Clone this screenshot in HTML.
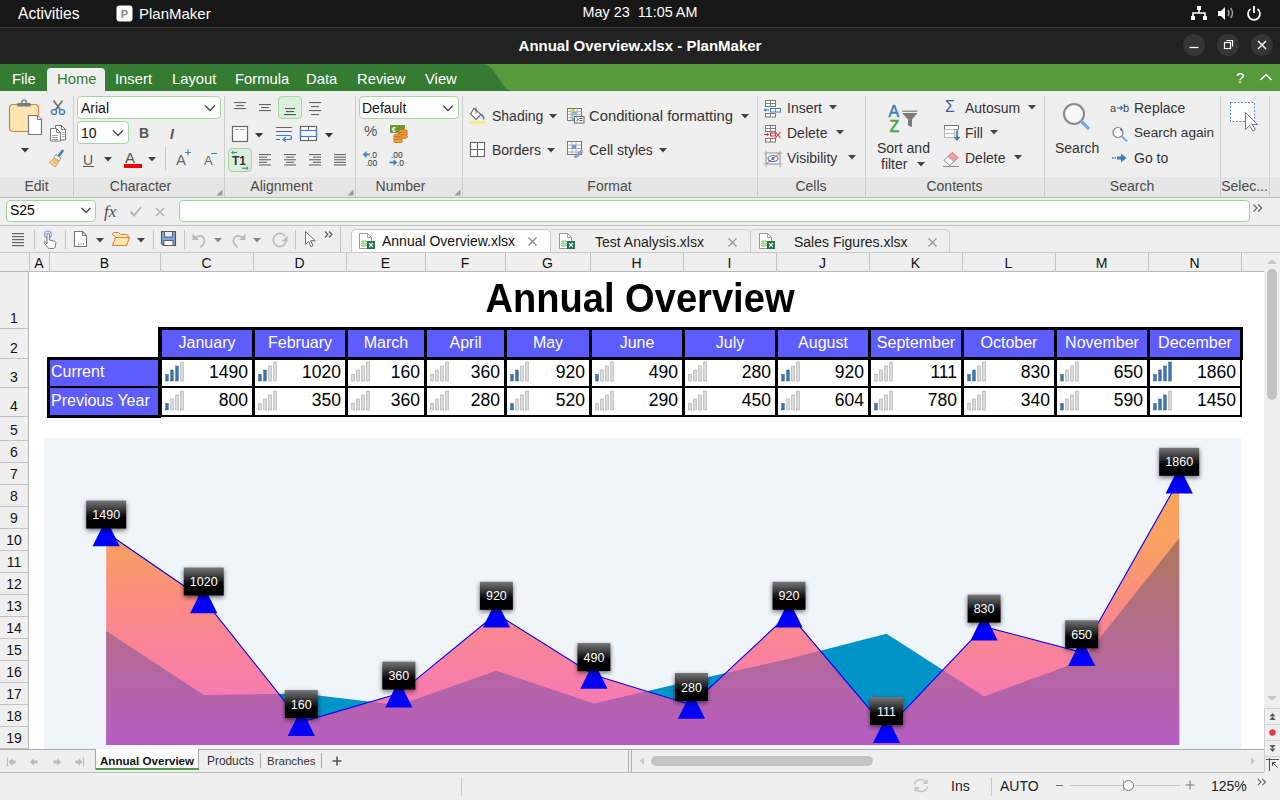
<!DOCTYPE html>
<html><head><meta charset="utf-8"><style>
html,body{margin:0;padding:0;width:1280px;height:800px;overflow:hidden;position:relative;font-family:"Liberation Sans", sans-serif;background:#efefef}
div{box-sizing:border-box}
</style></head><body>
<div style="position:absolute;left:0px;top:0px;width:1280px;height:27px;background:#171717"></div>
<div style="position:absolute;left:18px;top:0px;height:27px;line-height:27px;text-align:left;white-space:nowrap;color:#fff;font-size:15.6px;">Activities</div>
<svg style="position:absolute;left:116px;top:5px;" width="17" height="17" viewBox="0 0 17 17"><rect x="0.5" y="0.5" width="16" height="16" rx="3" fill="#fafafa"/><text x="8.3" y="12.8" font-family="Liberation Sans" font-weight="bold" font-size="11" fill="#8a8a8a" text-anchor="middle">P</text></svg>
<div style="position:absolute;left:139px;top:0px;height:27px;line-height:27px;text-align:left;white-space:nowrap;color:#fff;font-size:15px;">PlanMaker</div>
<div style="position:absolute;left:540px;top:0px;width:200px;height:25px;line-height:25px;text-align:center;white-space:nowrap;color:#fff;font-size:14.4px;">May 23&nbsp;&nbsp;11:05 AM</div>
<svg style="position:absolute;left:1190px;top:5px;" width="18" height="16" viewBox="0 0 18 16"><rect x="7" y="1" width="4" height="4" fill="#fff"/><rect x="1" y="11" width="4" height="4" fill="#fff"/><rect x="13" y="11" width="4" height="4" fill="#fff"/><path d="M9 5v3M3 11V8h12v3" stroke="#fff" stroke-width="1.6" fill="none"/></svg>
<svg style="position:absolute;left:1216px;top:5px;" width="20" height="17" viewBox="0 0 20 17"><path d="M2 6h3l4-4v13l-4-4H2z" fill="#fff"/><path d="M12 5q2 3 0 6M14.5 3q4 5 0 10" stroke="#fff" stroke-width="1.4" fill="none" opacity="0.6"/></svg>
<svg style="position:absolute;left:1245px;top:4px;" width="18" height="18" viewBox="0 0 18 18"><path d="M5.5 5a6 6 0 1 0 7 0" stroke="#fff" stroke-width="1.8" fill="none"/><path d="M9 2v7" stroke="#fff" stroke-width="1.8"/></svg>
<div style="position:absolute;left:0px;top:27px;width:1280px;height:37px;background:#222222"></div>
<div style="position:absolute;left:0px;top:27px;width:1280px;height:1px;background:#363636"></div>
<div style="position:absolute;left:340px;top:27px;width:600px;height:37px;line-height:37px;text-align:center;white-space:nowrap;color:#fff;font-size:15px;font-weight:bold;">Annual Overview.xlsx - PlanMaker</div>
<div style="position:absolute;left:1183px;top:34px;width:22px;height:22px;background:#353535;border-radius:11px"></div>
<div style="position:absolute;left:1217px;top:34px;width:22px;height:22px;background:#353535;border-radius:11px"></div>
<div style="position:absolute;left:1251px;top:34px;width:22px;height:22px;background:#353535;border-radius:11px"></div>
<svg style="position:absolute;left:1188px;top:41px;" width="12" height="12" viewBox="0 0 12 12"><path d="M1.5 6.5h9" stroke="#fff" stroke-width="1.3"/></svg>
<svg style="position:absolute;left:1222px;top:39px;" width="12" height="12" viewBox="0 0 12 12"><rect x="2.5" y="3.5" width="6" height="6" stroke="#fff" stroke-width="1.2" fill="none"/><path d="M4.5 1.5h6v6" stroke="#fff" stroke-width="1.2" fill="none"/></svg>
<svg style="position:absolute;left:1256px;top:39px;" width="12" height="12" viewBox="0 0 12 12"><path d="M2 2l8 8M10 2l-8 8" stroke="#fff" stroke-width="1.4"/></svg>
<div style="position:absolute;left:0px;top:64px;width:1280px;height:27px;background:#579a3e"></div>
<svg style="position:absolute;left:0px;top:64px;" width="520" height="27" viewBox="0 0 520 27"><path d="M0 0H480C492 0 494 8 500 16C504 22 506 26 512 27H0Z" fill="#357c32"/></svg>
<div style="position:absolute;left:47px;top:68px;width:58px;height:23px;background:#efefef;border-radius:4px 4px 0 0"></div>
<div style="position:absolute;left:12px;top:67px;height:25px;line-height:25px;text-align:left;white-space:nowrap;color:#fff;font-size:14.8px;">File</div>
<div style="position:absolute;left:57px;top:67px;height:25px;line-height:25px;text-align:left;white-space:nowrap;color:#2e7d32;font-size:14.8px;">Home</div>
<div style="position:absolute;left:115px;top:67px;height:25px;line-height:25px;text-align:left;white-space:nowrap;color:#fff;font-size:14.8px;">Insert</div>
<div style="position:absolute;left:172px;top:67px;height:25px;line-height:25px;text-align:left;white-space:nowrap;color:#fff;font-size:14.8px;">Layout</div>
<div style="position:absolute;left:235px;top:67px;height:25px;line-height:25px;text-align:left;white-space:nowrap;color:#fff;font-size:14.8px;">Formula</div>
<div style="position:absolute;left:306px;top:67px;height:25px;line-height:25px;text-align:left;white-space:nowrap;color:#fff;font-size:14.8px;">Data</div>
<div style="position:absolute;left:357px;top:67px;height:25px;line-height:25px;text-align:left;white-space:nowrap;color:#fff;font-size:14.8px;">Review</div>
<div style="position:absolute;left:425px;top:67px;height:25px;line-height:25px;text-align:left;white-space:nowrap;color:#fff;font-size:14.8px;">View</div>
<div style="position:absolute;left:1236px;top:64px;height:27px;line-height:27px;text-align:left;white-space:nowrap;color:#fff;font-size:15px;">?</div>
<svg style="position:absolute;left:1259px;top:72px;" width="14" height="10" viewBox="0 0 14 10"><path d="M1.5 8l5.5-5.5 5.5 5.5" stroke="#fff" stroke-width="1.4" fill="none"/></svg>
<div style="position:absolute;left:0px;top:91px;width:1280px;height:107px;background:#efefef"></div>
<div style="position:absolute;left:0px;top:177px;width:1280px;height:20px;background:#e6e6e6"></div>
<div style="position:absolute;left:0px;top:197px;width:1280px;height:1px;background:#bdbdbd"></div>
<div style="position:absolute;left:73px;top:96px;width:1px;height:101px;background:#cdcdcd"></div>
<div style="position:absolute;left:224px;top:96px;width:1px;height:101px;background:#cdcdcd"></div>
<div style="position:absolute;left:355px;top:96px;width:1px;height:101px;background:#cdcdcd"></div>
<div style="position:absolute;left:462px;top:96px;width:1px;height:101px;background:#cdcdcd"></div>
<div style="position:absolute;left:757px;top:96px;width:1px;height:101px;background:#cdcdcd"></div>
<div style="position:absolute;left:865px;top:96px;width:1px;height:101px;background:#cdcdcd"></div>
<div style="position:absolute;left:1044px;top:96px;width:1px;height:101px;background:#cdcdcd"></div>
<div style="position:absolute;left:1220px;top:96px;width:1px;height:101px;background:#cdcdcd"></div>
<div style="position:absolute;left:1269px;top:96px;width:1px;height:101px;background:#cdcdcd"></div>
<div style="position:absolute;left:0px;top:176px;width:73px;height:20px;line-height:20px;text-align:center;white-space:nowrap;color:#4a4a4a;font-size:14px;">Edit</div>
<div style="position:absolute;left:65px;top:176px;width:151px;height:20px;line-height:20px;text-align:center;white-space:nowrap;color:#4a4a4a;font-size:14px;">Character</div>
<div style="position:absolute;left:216px;top:176px;width:131px;height:20px;line-height:20px;text-align:center;white-space:nowrap;color:#4a4a4a;font-size:14px;">Alignment</div>
<div style="position:absolute;left:347px;top:176px;width:107px;height:20px;line-height:20px;text-align:center;white-space:nowrap;color:#4a4a4a;font-size:14px;">Number</div>
<div style="position:absolute;left:462px;top:176px;width:295px;height:20px;line-height:20px;text-align:center;white-space:nowrap;color:#4a4a4a;font-size:14px;">Format</div>
<div style="position:absolute;left:757px;top:176px;width:108px;height:20px;line-height:20px;text-align:center;white-space:nowrap;color:#4a4a4a;font-size:14px;">Cells</div>
<div style="position:absolute;left:865px;top:176px;width:179px;height:20px;line-height:20px;text-align:center;white-space:nowrap;color:#4a4a4a;font-size:14px;">Contents</div>
<div style="position:absolute;left:1044px;top:176px;width:176px;height:20px;line-height:20px;text-align:center;white-space:nowrap;color:#4a4a4a;font-size:14px;">Search</div>
<div style="position:absolute;left:1220px;top:176px;width:49px;height:20px;line-height:20px;text-align:center;white-space:nowrap;color:#4a4a4a;font-size:14px;">Selec...</div>
<svg style="position:absolute;left:8px;top:99px" width="36" height="37" viewBox="0 0 36 37"><rect x="1.5" y="5.5" width="29" height="27" rx="3.5" fill="#fde4b0" stroke="#c98a42" stroke-width="1.2"/>
<rect x="9" y="4" width="14" height="3.5" rx="1.2" fill="#7a7a7a"/><circle cx="16" cy="3" r="2.2" fill="none" stroke="#7a7a7a" stroke-width="1.3"/>
<path d="M20.5 16.5h9l4 4v15h-13z" fill="#fff" stroke="#777" stroke-width="1.2"/><path d="M29.5 16.5v4h4" fill="#eee" stroke="#777" stroke-width="1"/></svg>
<svg style="position:absolute;left:21px;top:148px" width="8" height="5" viewBox="0 0 8 5"><path d="M0 0h8L4 4.5z" fill="#3a3a3a"/></svg>
<svg style="position:absolute;left:50px;top:99px" width="16" height="17" viewBox="0 0 16 17"><path d="M3.5 1.5L10.5 11M12.5 1.5L5.5 11" stroke="#6c6c6c" stroke-width="1.6"/>
<ellipse cx="4" cy="13" rx="2.6" ry="2.4" fill="none" stroke="#3e7fc1" stroke-width="1.4"/><ellipse cx="12" cy="13" rx="2.6" ry="2.4" fill="none" stroke="#3e7fc1" stroke-width="1.4"/></svg>
<svg style="position:absolute;left:49px;top:124px" width="18" height="18" viewBox="0 0 18 18"><path d="M6.5 1.5h6l4 4v10.5h-10z" fill="#fff" stroke="#777" stroke-width="1"/><path d="M12.5 1.5v4h4" fill="none" stroke="#777" stroke-width="0.9"/><path d="M1.5 4.5h6l4 4v8.5h-10z" fill="#fff" stroke="#777" stroke-width="1"/><path d="M7.5 4.5v4h4" fill="none" stroke="#777" stroke-width="0.9"/><path d="M3 11.5h6M3 13.5h6M3 15.5h6M13 8.5h2.5M13 10.5h2.5M13 12.5h2.5" stroke="#8a8a8a" stroke-width="0.8"/></svg>
<svg style="position:absolute;left:48px;top:149px" width="18" height="19" viewBox="0 0 18 19"><path d="M11 6.5l3.5-4.5" stroke="#3e7fc1" stroke-width="2.6" stroke-linecap="round"/>
<path d="M8 5.5l5 3.5-2 3-5-3.5z" fill="#fff" stroke="#888" stroke-width="1"/>
<path d="M6 9l5 3.5-3.5 5.5-6.5-4.5z" fill="#f2d08a" stroke="#d9a85a" stroke-width="0.9"/><path d="M4.5 12l4 3M5.8 10.5l4 3" stroke="#d9a85a" stroke-width="0.7"/></svg>
<div style="position:absolute;left:77px;top:96px;width:144px;height:23px;background:#fff;border:1px solid #a6d6a1;border-radius:4px"></div>
<div style="position:absolute;left:81px;top:98px;height:21px;line-height:21px;font-size:14px;color:#111;white-space:nowrap;">Arial</div>
<svg style="position:absolute;left:204px;top:104px" width="12" height="8" viewBox="0 0 12 8"><path d="M1 1.5l5 5 5-5" stroke="#444" stroke-width="1.3" fill="none"/></svg>
<div style="position:absolute;left:77px;top:121px;width:52px;height:23px;background:#fff;border:1px solid #a6d6a1;border-radius:4px"></div>
<div style="position:absolute;left:81px;top:123px;height:21px;line-height:21px;font-size:14px;color:#111;white-space:nowrap;">10</div>
<svg style="position:absolute;left:112px;top:129px" width="12" height="8" viewBox="0 0 12 8"><path d="M1 1.5l5 5 5-5" stroke="#444" stroke-width="1.3" fill="none"/></svg>
<div style="position:absolute;left:139px;top:123px;height:21px;line-height:21px;font-size:14px;color:#555;white-space:nowrap;"><b>B</b></div>
<div style="position:absolute;left:170px;top:124px;height:21px;line-height:21px;font-size:14px;color:#555;white-space:nowrap;font-weight:bold"><i>I</i></div>
<div style="position:absolute;left:83px;top:150px;height:20px;line-height:20px;font-size:14px;color:#555;white-space:nowrap;">U</div>
<div style="position:absolute;left:83px;top:166px;width:11px;height:1px;background:#555"></div>
<svg style="position:absolute;left:104px;top:157px" width="8" height="5" viewBox="0 0 8 5"><path d="M0 0h8L4 4.5z" fill="#444"/></svg>
<div style="position:absolute;left:125px;top:148px;height:20px;line-height:20px;font-size:15px;color:#555;white-space:nowrap;">A</div>
<div style="position:absolute;left:124px;top:164px;width:18px;height:4px;background:#ee0000"></div>
<svg style="position:absolute;left:148px;top:157px" width="8" height="5" viewBox="0 0 8 5"><path d="M0 0h8L4 4.5z" fill="#444"/></svg>
<div style="position:absolute;left:165px;top:147px;width:1px;height:24px;background:#c8c8c8"></div>
<div style="position:absolute;left:176px;top:150px;height:20px;line-height:20px;font-size:15px;color:#666;white-space:nowrap;">A</div>
<svg style="position:absolute;left:184px;top:149px" width="8" height="8" viewBox="0 0 8 8"><path d="M4 0.5v6M1 3.5h6" stroke="#3e7fc1" stroke-width="1.1"/></svg>
<div style="position:absolute;left:204px;top:152px;height:18px;line-height:18px;font-size:13px;color:#666;white-space:nowrap;">A</div>
<svg style="position:absolute;left:210px;top:151px" width="8" height="6" viewBox="0 0 8 6"><path d="M1 2.5h6" stroke="#3e7fc1" stroke-width="1.1"/></svg>
<svg style="position:absolute;left:216px;top:189px" width="7" height="7" viewBox="0 0 7 7"><path d="M6.5 0.5v6h-6z" fill="#999"/></svg>
<svg style="position:absolute;left:234px;top:102px" width="14" height="10" viewBox="0 0 14 10"><rect x="0" y="0" width="12" height="1.1" fill="#666"/><rect x="2" y="3" width="8" height="1.1" fill="#666"/><rect x="0" y="6" width="12" height="1.1" fill="#666"/></svg>
<svg style="position:absolute;left:259px;top:104px" width="14" height="10" viewBox="0 0 14 10"><rect x="0" y="0" width="12" height="1.1" fill="#666"/><rect x="2" y="3" width="8" height="1.1" fill="#666"/><rect x="0" y="6" width="12" height="1.1" fill="#666"/></svg>
<div style="position:absolute;left:278px;top:96px;width:24px;height:23px;background:#dcefdc;border:1px solid #a6d6a1;border-radius:4px"></div>
<svg style="position:absolute;left:284px;top:108px" width="14" height="10" viewBox="0 0 14 10"><rect x="1" y="0" width="10" height="1.1" fill="#555"/><rect x="2" y="3" width="8" height="1.1" fill="#555"/><rect x="0" y="6" width="12" height="1.1" fill="#555"/></svg>
<svg style="position:absolute;left:309px;top:102px" width="14" height="17" viewBox="0 0 14 17"><rect x="0" y="0" width="12" height="1.1" fill="#666"/><rect x="2" y="4" width="8" height="1.1" fill="#666"/><rect x="0" y="8" width="12" height="1.1" fill="#666"/><rect x="2" y="12" width="8" height="1.1" fill="#666"/></svg>
<svg style="position:absolute;left:231px;top:125px" width="18" height="18" viewBox="0 0 18 18"><rect x="1.5" y="1.5" width="15" height="15" fill="#fff" stroke="#666" stroke-width="1.2"/><path d="M4 4.5h4M9.5 4.5h4" stroke="#999" stroke-width="0.9"/></svg>
<svg style="position:absolute;left:255px;top:133px" width="8" height="5" viewBox="0 0 8 5"><path d="M0 0h8L4 4.5z" fill="#333"/></svg>
<svg style="position:absolute;left:275px;top:126px" width="18" height="17" viewBox="0 0 18 17"><path d="M1 1.5h16M1 5.5h16M1 9.5h4M1 13.5h4" stroke="#666" stroke-width="1.1"/><path d="M1 9.5h13.5a2 2 0 0 1 0 4H9" stroke="#3e7fc1" stroke-width="1.2" fill="none"/><path d="M11 11l-3 2.5 3 2.5" stroke="#3e7fc1" stroke-width="1.2" fill="none"/></svg>
<svg style="position:absolute;left:299px;top:125px" width="19" height="18" viewBox="0 0 19 18"><rect x="1.5" y="1.5" width="16" height="14" fill="#fff" stroke="#666" stroke-width="1.2"/><path d="M9.5 1.5v3.5M9.5 12v3.5" stroke="#666" stroke-width="1"/><rect x="1.5" y="5.5" width="16" height="6" fill="none" stroke="#3e7fc1" stroke-width="1.2"/></svg>
<svg style="position:absolute;left:325px;top:133px" width="8" height="5" viewBox="0 0 8 5"><path d="M0 0h8L4 4.5z" fill="#333"/></svg>
<div style="position:absolute;left:228px;top:148px;width:24px;height:24px;background:#dcefdc;border:1px solid #a6d6a1;border-radius:4px"></div>
<svg style="position:absolute;left:230px;top:150px" width="20" height="20" viewBox="0 0 20 20"><path d="M2 2.5h5" stroke="#3e7fc1" stroke-width="1.1"/><path d="M3.5 0.8L1.5 2.5l2 1.7" fill="none" stroke="#3e7fc1" stroke-width="1"/><text x="2" y="15" font-family="Liberation Sans" font-weight="bold" font-size="12" fill="#333">T1</text><path d="M12 18.2h6" stroke="#3e7fc1" stroke-width="1.1"/><path d="M16.3 16.5l2 1.7-2 1.7" fill="none" stroke="#3e7fc1" stroke-width="1"/></svg>
<svg style="position:absolute;left:259px;top:154px" width="14" height="14.0" viewBox="0 0 14 14.0"><rect x="0" y="0.0" width="12" height="1.1" fill="#666"/><rect x="0" y="2.6" width="8" height="1.1" fill="#666"/><rect x="0" y="5.2" width="12" height="1.1" fill="#666"/><rect x="0" y="7.800000000000001" width="8" height="1.1" fill="#666"/><rect x="0" y="10.4" width="12" height="1.1" fill="#666"/></svg>
<svg style="position:absolute;left:284px;top:154px" width="14" height="14.0" viewBox="0 0 14 14.0"><rect x="0" y="0.0" width="12" height="1.1" fill="#666"/><rect x="2" y="2.6" width="8" height="1.1" fill="#666"/><rect x="0" y="5.2" width="12" height="1.1" fill="#666"/><rect x="2" y="7.800000000000001" width="8" height="1.1" fill="#666"/><rect x="0" y="10.4" width="12" height="1.1" fill="#666"/></svg>
<svg style="position:absolute;left:309px;top:154px" width="14" height="14.0" viewBox="0 0 14 14.0"><rect x="0" y="0.0" width="12" height="1.1" fill="#666"/><rect x="4" y="2.6" width="8" height="1.1" fill="#666"/><rect x="0" y="5.2" width="12" height="1.1" fill="#666"/><rect x="4" y="7.800000000000001" width="8" height="1.1" fill="#666"/><rect x="0" y="10.4" width="12" height="1.1" fill="#666"/></svg>
<svg style="position:absolute;left:334px;top:154px" width="14" height="14.0" viewBox="0 0 14 14.0"><rect x="0" y="0.0" width="12" height="1.1" fill="#666"/><rect x="0" y="2.6" width="12" height="1.1" fill="#666"/><rect x="0" y="5.2" width="12" height="1.1" fill="#666"/><rect x="0" y="7.800000000000001" width="12" height="1.1" fill="#666"/><rect x="0" y="10.4" width="12" height="1.1" fill="#666"/></svg>
<svg style="position:absolute;left:347px;top:189px" width="7" height="7" viewBox="0 0 7 7"><path d="M6.5 0.5v6h-6z" fill="#999"/></svg>
<div style="position:absolute;left:359px;top:96px;width:100px;height:23px;background:#fff;border:1px solid #a6d6a1;border-radius:4px"></div>
<div style="position:absolute;left:362px;top:98px;height:21px;line-height:21px;font-size:14px;color:#111;white-space:nowrap;">Default</div>
<svg style="position:absolute;left:442px;top:104px" width="12" height="8" viewBox="0 0 12 8"><path d="M1 1.5l5 5 5-5" stroke="#444" stroke-width="1.3" fill="none"/></svg>
<div style="position:absolute;left:364px;top:122px;height:18px;line-height:18px;font-size:15px;color:#555;white-space:nowrap;">%</div>
<svg style="position:absolute;left:389px;top:124px" width="20" height="19" viewBox="0 0 20 19"><rect x="1" y="1" width="15" height="8" fill="#6c9a2e"/><text x="3" y="8" font-size="7" font-family="Liberation Sans" font-weight="bold" fill="#fff">€</text>
<ellipse cx="14" cy="7.5" rx="4.5" ry="2" fill="#f0a040" stroke="#c06a18" stroke-width="0.8"/><ellipse cx="14" cy="10" rx="4.5" ry="2" fill="#f0a040" stroke="#c06a18" stroke-width="0.8"/><ellipse cx="14" cy="12.5" rx="4.5" ry="2" fill="#f0a040" stroke="#c06a18" stroke-width="0.8"/>
<ellipse cx="9" cy="12" rx="4.5" ry="2" fill="#f0a040" stroke="#c06a18" stroke-width="0.8"/><ellipse cx="9" cy="14.5" rx="4.5" ry="2" fill="#f0a040" stroke="#c06a18" stroke-width="0.8"/><ellipse cx="9" cy="17" rx="4.5" ry="2" fill="#f0a040" stroke="#c06a18" stroke-width="0.8"/></svg>
<svg style="position:absolute;left:362px;top:149px" width="18" height="19" viewBox="0 0 18 19"><path d="M3 5.5h5" stroke="#3e7fc1" stroke-width="1.8"/><path d="M4.5 2L0.8 5.5 4.5 9z" fill="#3e7fc1"/><text x="8" y="9" font-size="8.5" font-family="Liberation Sans" fill="#333">.0</text><text x="3.5" y="17" font-size="8.5" font-family="Liberation Sans" fill="#333">.00</text></svg>
<svg style="position:absolute;left:388px;top:149px" width="19" height="19" viewBox="0 0 19 19"><text x="3" y="9" font-size="8.5" font-family="Liberation Sans" fill="#333">.00</text><path d="M1.5 13.5h5" stroke="#3e7fc1" stroke-width="1.8"/><path d="M5.5 10l3.7 3.5-3.7 3.5z" fill="#3e7fc1"/><text x="9" y="17" font-size="8.5" font-family="Liberation Sans" fill="#333">.0</text></svg>
<svg style="position:absolute;left:454px;top:189px" width="7" height="7" viewBox="0 0 7 7"><path d="M6.5 0.5v6h-6z" fill="#999"/></svg>
<svg style="position:absolute;left:468px;top:106px" width="20" height="19" viewBox="0 0 20 19"><path d="M6 2.5l7 6-5 5-5.5-5.5z" fill="#fff" stroke="#666" stroke-width="1.1"/><path d="M8 1.5v6" stroke="#666" stroke-width="1"/><path d="M13 8.5c2 1 3 3 2.5 5" stroke="#3e7fc1" stroke-width="1.6" fill="none"/><rect x="1" y="15" width="17" height="3" fill="#f6ec8a"/></svg>
<div style="position:absolute;left:492px;top:106px;height:20px;line-height:20px;font-size:14px;color:#333;white-space:nowrap;">Shading</div>
<svg style="position:absolute;left:549px;top:114px" width="8" height="5" viewBox="0 0 8 5"><path d="M0 0h8L4 4.5z" fill="#444"/></svg>
<svg style="position:absolute;left:566px;top:107px" width="19" height="17" viewBox="0 0 19 17"><rect x="1.5" y="1.5" width="14" height="12" fill="#fff" stroke="#777" stroke-width="1"/><path d="M1.5 4.5h14M1.5 7.5h14M1.5 10.5h14M5 1.5v12M11 1.5v12" stroke="#aaa" stroke-width="0.8"/><rect x="5.5" y="2" width="3.5" height="2.5" fill="#c8e040"/><rect x="5.5" y="5" width="5.5" height="2.5" fill="#8ab0f0"/><rect x="5.5" y="8" width="2.5" height="2.5" fill="#c8e040"/><rect x="5.5" y="11" width="3" height="2.5" fill="#8ab0f0"/><rect x="8.5" y="9.5" width="9.5" height="6.5" fill="#fff" stroke="#666" stroke-width="1"/><path d="M10.5 11l2 1.5-2 1.5M13.5 11.5h3M13.5 13.5h3" stroke="#333" stroke-width="0.9" fill="none"/></svg>
<div style="position:absolute;left:589px;top:106px;height:20px;line-height:20px;font-size:14.8px;color:#333;white-space:nowrap;">Conditional formatting</div>
<svg style="position:absolute;left:741px;top:114px" width="8" height="5" viewBox="0 0 8 5"><path d="M0 0h8L4 4.5z" fill="#444"/></svg>
<svg style="position:absolute;left:469px;top:141px" width="17" height="17" viewBox="0 0 17 17"><rect x="1.5" y="1.5" width="14" height="14" fill="#fff" stroke="#666" stroke-width="1.1"/><path d="M8.5 1.5v14M1.5 8.5h14" stroke="#666" stroke-width="1.1"/></svg>
<div style="position:absolute;left:492px;top:140px;height:20px;line-height:20px;font-size:14px;color:#333;white-space:nowrap;">Borders</div>
<svg style="position:absolute;left:547px;top:148px" width="8" height="5" viewBox="0 0 8 5"><path d="M0 0h8L4 4.5z" fill="#444"/></svg>
<svg style="position:absolute;left:566px;top:140px" width="19" height="19" viewBox="0 0 19 19"><rect x="1.5" y="1.5" width="14" height="13" fill="#fff" stroke="#777" stroke-width="1"/><path d="M1.5 5h14M1.5 8.5h14M1.5 12h14M6 1.5v13M10 1.5v13" stroke="#999" stroke-width="0.8"/><rect x="6" y="5" width="4" height="3.5" fill="#6e9be0"/><path d="M8 17l7-7 2 2-7 6z" fill="#8aa6e8" stroke="#888" stroke-width="0.6"/></svg>
<div style="position:absolute;left:589px;top:140px;height:20px;line-height:20px;font-size:14px;color:#333;white-space:nowrap;">Cell styles</div>
<svg style="position:absolute;left:659px;top:148px" width="8" height="5" viewBox="0 0 8 5"><path d="M0 0h8L4 4.5z" fill="#444"/></svg>
<svg style="position:absolute;left:763px;top:99px" width="20" height="19" viewBox="0 0 20 19"><rect x="2.5" y="1.5" width="10" height="6" fill="#fff" stroke="#777" stroke-width="1"/><path d="M7.5 1.5v6M2.5 4.5h10" stroke="#777" stroke-width="0.9"/><rect x="7.5" y="9.5" width="10" height="3.5" fill="#fff" stroke="#3e7fc1" stroke-width="1"/><path d="M12.5 9.5v3.5" stroke="#3e7fc1" stroke-width="0.9"/><path d="M1 11h5" stroke="#3e7fc1" stroke-width="1.1"/><path d="M3 9.3L0.8 11 3 12.7z" fill="#3e7fc1"/><rect x="2.5" y="14.5" width="10" height="3.5" fill="#fff" stroke="#777" stroke-width="1"/><path d="M7.5 14.5v3.5" stroke="#777" stroke-width="0.9"/></svg>
<div style="position:absolute;left:787px;top:98px;height:20px;line-height:20px;font-size:14px;color:#333;white-space:nowrap;">Insert</div>
<svg style="position:absolute;left:829px;top:105px" width="8" height="5" viewBox="0 0 8 5"><path d="M0 0h8L4 4.5z" fill="#444"/></svg>
<svg style="position:absolute;left:763px;top:124px" width="20" height="19" viewBox="0 0 20 19"><rect x="2.5" y="1.5" width="10" height="6" fill="#fff" stroke="#777" stroke-width="1"/><path d="M7.5 1.5v6M2.5 4.5h10" stroke="#777" stroke-width="0.9"/><path d="M1 10.5h4" stroke="#d33" stroke-width="1.1"/><path d="M4 8.8L6.2 10.5 4 12.2z" fill="#d33"/><rect x="7.5" y="9" width="5" height="3" fill="none" stroke="#d33" stroke-width="1"/><path d="M12.5 8l5 6M17.5 8l-5 6" stroke="#d33" stroke-width="1.1"/><rect x="2.5" y="14.5" width="10" height="3.5" fill="#fff" stroke="#777" stroke-width="1"/><path d="M7.5 14.5v3.5" stroke="#777" stroke-width="0.9"/></svg>
<div style="position:absolute;left:787px;top:123px;height:20px;line-height:20px;font-size:14px;color:#333;white-space:nowrap;">Delete</div>
<svg style="position:absolute;left:836px;top:130px" width="8" height="5" viewBox="0 0 8 5"><path d="M0 0h8L4 4.5z" fill="#444"/></svg>
<svg style="position:absolute;left:763px;top:150px" width="20" height="18" viewBox="0 0 20 18"><rect x="3" y="3" width="14" height="11" fill="#fff" stroke="#999" stroke-width="0.8"/><path d="M0.5 3h19M0.5 14h19M3 0.5v17M17 0.5v17" stroke="#aaa" stroke-width="0.8"/><ellipse cx="10" cy="8.5" rx="5" ry="3" fill="none" stroke="#3e7fc1" stroke-width="1.2"/><circle cx="10" cy="8.5" r="1.4" fill="#3e7fc1"/><path d="M3.5 13.5l13-10" stroke="#d33" stroke-width="0.9"/></svg>
<div style="position:absolute;left:787px;top:148px;height:20px;line-height:20px;font-size:14px;color:#333;white-space:nowrap;">Visibility</div>
<svg style="position:absolute;left:848px;top:155px" width="8" height="5" viewBox="0 0 8 5"><path d="M0 0h8L4 4.5z" fill="#444"/></svg>
<svg style="position:absolute;left:886px;top:101px" width="34" height="32" viewBox="0 0 34 32"><text x="2.5" y="15.5" font-family="Liberation Sans" font-size="16" fill="#3a7ab8" stroke="#3a7ab8" stroke-width="0.5">A</text><text x="3.5" y="30.5" font-family="Liberation Sans" font-size="16" fill="#45a045" stroke="#45a045" stroke-width="0.5">Z</text><path d="M16 12h15.5l-5.5 6.5v7.5l-4-1.5v-6z" fill="#7a7a7a"/><path d="M16 10.2h15.5" stroke="#7a7a7a" stroke-width="1.1"/></svg>
<div style="position:absolute;left:877px;top:138px;height:20px;line-height:20px;font-size:14px;color:#333;white-space:nowrap;">Sort and</div>
<div style="position:absolute;left:881px;top:154px;height:20px;line-height:20px;font-size:14px;color:#333;white-space:nowrap;">filter</div>
<svg style="position:absolute;left:917px;top:162px" width="8" height="5" viewBox="0 0 8 5"><path d="M0 0h8L4 4.5z" fill="#444"/></svg>
<div style="position:absolute;left:945px;top:97px;height:20px;line-height:20px;font-size:16px;color:#4a5a8a;white-space:nowrap;">&Sigma;</div>
<div style="position:absolute;left:965px;top:98px;height:20px;line-height:20px;font-size:14px;color:#333;white-space:nowrap;">Autosum</div>
<svg style="position:absolute;left:1028px;top:105px" width="8" height="5" viewBox="0 0 8 5"><path d="M0 0h8L4 4.5z" fill="#444"/></svg>
<svg style="position:absolute;left:943px;top:124px" width="19" height="19" viewBox="0 0 19 19"><rect x="1.5" y="1.5" width="14" height="4" fill="#fff" stroke="#777" stroke-width="1"/><rect x="1.5" y="5.5" width="10" height="4" fill="#fff" stroke="#bbb" stroke-width="1"/><rect x="1.5" y="9.5" width="10" height="4" fill="#fff" stroke="#bbb" stroke-width="1"/><path d="M14 6.5v9" stroke="#3e7fc1" stroke-width="1.8"/><path d="M10.5 13l3.5 4 3.5-4z" fill="#3e7fc1"/></svg>
<div style="position:absolute;left:965px;top:123px;height:20px;line-height:20px;font-size:14px;color:#333;white-space:nowrap;">Fill</div>
<svg style="position:absolute;left:990px;top:130px" width="8" height="5" viewBox="0 0 8 5"><path d="M0 0h8L4 4.5z" fill="#444"/></svg>
<svg style="position:absolute;left:942px;top:149px" width="19" height="19" viewBox="0 0 19 19"><path d="M2 11.5l8-8 6 5-8 8z" fill="#fff" stroke="#888" stroke-width="1"/><path d="M6 7.5l4-4 6 5-4 4z" fill="#f0a0a8" stroke="#d87a84" stroke-width="0.8"/><path d="M1 17.5h16" stroke="#888" stroke-width="1"/></svg>
<div style="position:absolute;left:965px;top:148px;height:20px;line-height:20px;font-size:14px;color:#333;white-space:nowrap;">Delete</div>
<svg style="position:absolute;left:1014px;top:155px" width="8" height="5" viewBox="0 0 8 5"><path d="M0 0h8L4 4.5z" fill="#444"/></svg>
<svg style="position:absolute;left:1061px;top:101px" width="32" height="32" viewBox="0 0 32 32"><circle cx="13" cy="13" r="10" fill="#f7f7f7" stroke="#8c8c8c" stroke-width="2.2"/><path d="M20 20l8 8" stroke="#7aa6e8" stroke-width="3.2" stroke-linecap="butt"/></svg>
<div style="position:absolute;left:1055px;top:138px;height:20px;line-height:20px;font-size:14px;color:#333;white-space:nowrap;">Search</div>
<svg style="position:absolute;left:1110px;top:101px" width="20" height="14" viewBox="0 0 20 14"><text x="0" y="11" font-family="Liberation Sans" font-size="11" fill="#444">a</text><path d="M7 7h5" stroke="#3e7fc1" stroke-width="1.3"/><path d="M10.5 4.8L13 7l-2.5 2.2" fill="#3e7fc1" stroke="#3e7fc1" stroke-width="0.8"/><text x="13" y="11" font-family="Liberation Sans" font-size="11" fill="#444">b</text></svg>
<div style="position:absolute;left:1134px;top:98px;height:20px;line-height:20px;font-size:14px;color:#333;white-space:nowrap;">Replace</div>
<svg style="position:absolute;left:1111px;top:126px" width="18" height="16" viewBox="0 0 18 16"><circle cx="7" cy="6.5" r="5" fill="#fff" stroke="#888" stroke-width="1.2"/><path d="M10.5 10l5.5 5.5" stroke="#7aa6e8" stroke-width="2"/><path d="M8.5 3.5l2.5-1v3z" fill="#3e7fc1"/></svg>
<div style="position:absolute;left:1134px;top:123px;height:20px;line-height:20px;font-size:13.6px;color:#333;white-space:nowrap;">Search again</div>
<svg style="position:absolute;left:1111px;top:151px" width="18" height="14" viewBox="0 0 18 14"><path d="M1 7h1.5M3.5 7h1.5" stroke="#3e7fc1" stroke-width="1.6"/><path d="M6 7h5" stroke="#3e7fc1" stroke-width="3"/><path d="M10 2.5l5.5 4.5-5.5 4.5z" fill="#3e7fc1"/></svg>
<div style="position:absolute;left:1134px;top:148px;height:20px;line-height:20px;font-size:14px;color:#333;white-space:nowrap;">Go to</div>
<svg style="position:absolute;left:1228px;top:100px" width="34" height="34" viewBox="0 0 34 34"><rect x="2.5" y="2.5" width="24" height="19" fill="#fff" stroke="#3e7fc1" stroke-width="0.9" stroke-dasharray="2 1.5"/><path d="M17.5 12.5v17l4-4 3.5 5.5 2.5-1.5-3.5-5h5.5z" fill="#fff" stroke="#777" stroke-width="1"/></svg>
<div style="position:absolute;left:0px;top:198px;width:1280px;height:27px;background:#efefef"></div>
<div style="position:absolute;left:6px;top:200px;width:90px;height:22px;background:#fff;border:1px solid #9fd39b;border-radius:4px"></div>
<div style="position:absolute;left:10px;top:199px;height:23px;line-height:23px;text-align:left;white-space:nowrap;color:#000;font-size:14px;">S25</div>
<svg style="position:absolute;left:80px;top:205px;" width="12" height="10" viewBox="0 0 12 10"><path d="M1.5 3l4.5 4.5 4.5-4.5" stroke="#333" stroke-width="1.2" fill="none"/></svg>
<div style="position:absolute;left:104px;top:200px;height:23px;line-height:23px;text-align:left;white-space:nowrap;color:#505050;font-size:17px;font-family:'Liberation Serif',serif;"><i>fx</i></div>
<svg style="position:absolute;left:129px;top:205px;" width="14" height="12" viewBox="0 0 14 12"><path d="M1.5 6.5l3.5 4 7-8.5" stroke="#b4b4b4" stroke-width="1.9" fill="none"/></svg>
<svg style="position:absolute;left:154px;top:206px;" width="12" height="12" viewBox="0 0 12 12"><path d="M2 2l8 8M10 2l-8 8" stroke="#b4b4b4" stroke-width="1.6"/></svg>
<div style="position:absolute;left:179px;top:200px;width:1071px;height:22px;background:#fff;border:1px solid #9fd39b;border-radius:4px"></div>
<svg style="position:absolute;left:1252px;top:203px;" width="12" height="10" viewBox="0 0 12 10"><path d="M1.5 1.5l3.5 3.5-3.5 3.5M6 1.5l3.5 3.5-3.5 3.5" stroke="#666" stroke-width="1.2" fill="none"/></svg>
<div style="position:absolute;left:0px;top:225px;width:1280px;height:1px;background:#c0c0c0"></div>
<div style="position:absolute;left:0px;top:226px;width:1280px;height:26px;background:#efefef"></div>
<svg style="position:absolute;left:11px;top:232px" width="14" height="15" viewBox="0 0 14 15"><rect x="1" y="1" width="12" height="1.2" fill="#666"/><rect x="1" y="4" width="12" height="1.2" fill="#666"/><rect x="1" y="7" width="12" height="1.2" fill="#666"/><rect x="1" y="10" width="12" height="1.2" fill="#666"/><rect x="1" y="13" width="12" height="1.2" fill="#666"/></svg>
<div style="position:absolute;left:34px;top:230px;width:1px;height:19px;background:#c4c4c4"></div>
<svg style="position:absolute;left:42px;top:230px" width="15" height="19" viewBox="0 0 15 19"><circle cx="6" cy="4.5" r="3.5" fill="none" stroke="#8fa8f0" stroke-width="1.5"/><path d="M5 14V4.5a1.2 1.2 0 0 1 2.4 0V10l5 1.2c1 .3 1.5 1 1.4 2l-.6 3.5c-.2 1-.9 1.8-2 1.8H7.5c-.8 0-1.4-.4-1.8-1l-3.5-4.5c-.6-.8.4-1.8 1.2-1.2z" fill="#fff" stroke="#777" stroke-width="1"/></svg>
<div style="position:absolute;left:65px;top:230px;width:1px;height:19px;background:#c4c4c4"></div>
<svg style="position:absolute;left:73px;top:230px" width="15" height="18" viewBox="0 0 15 18"><path d="M1.5 1.5h8l4 4v11h-12z" fill="#fff" stroke="#777" stroke-width="1.1"/><path d="M9.5 1.5v4h4" fill="none" stroke="#777" stroke-width="1"/><path d="M5 14h1M7.5 14h1M10 14h1" stroke="#555" stroke-width="1"/></svg>
<svg style="position:absolute;left:96px;top:238px" width="8" height="5" viewBox="0 0 8 5"><path d="M0 0h8L4 4.5z" fill="#444"/></svg>
<svg style="position:absolute;left:111px;top:231px" width="20" height="16" viewBox="0 0 20 16"><path d="M1.5 3.5c0-1 .6-2 1.6-2h4.5l2 2h6c1 0 1.6.7 1.6 1.6V7H5.5z" fill="#fde4b0" stroke="#c98a42" stroke-width="1"/><path d="M1.5 14.5l3-8h14l-3 8z" fill="#fde4b0" stroke="#c98a42" stroke-width="1.1"/></svg>
<svg style="position:absolute;left:137px;top:238px" width="8" height="5" viewBox="0 0 8 5"><path d="M0 0h8L4 4.5z" fill="#444"/></svg>
<div style="position:absolute;left:153px;top:230px;width:1px;height:19px;background:#c4c4c4"></div>
<svg style="position:absolute;left:160px;top:230px" width="17" height="17" viewBox="0 0 17 17"><path d="M1.5 1.5h14v14h-12l-2-2z" fill="#7aa6e8" stroke="#555" stroke-width="1.1"/><rect x="4.5" y="1.5" width="8" height="5.5" fill="#e8eefc" stroke="#555" stroke-width="0.9"/><rect x="4" y="10.5" width="9" height="5" fill="#fff" stroke="#555" stroke-width="0.9"/></svg>
<div style="position:absolute;left:184px;top:230px;width:1px;height:19px;background:#c4c4c4"></div>
<svg style="position:absolute;left:191px;top:231px" width="16" height="17" viewBox="0 0 16 17"><path d="M4.5 6.5c6-4 11 1 8 6.5l-3 3.5" fill="none" stroke="#bbb" stroke-width="1.8"/><path d="M1.5 2.5v6.5h6.5z" fill="#bbb"/></svg>
<svg style="position:absolute;left:214px;top:238px" width="8" height="5" viewBox="0 0 8 5"><path d="M0 0h8L4 4.5z" fill="#888"/></svg>
<svg style="position:absolute;left:231px;top:231px" width="16" height="17" viewBox="0 0 16 17"><path d="M11.5 6.5c-6-4-11 1-8 6.5l3 3.5" fill="none" stroke="#bbb" stroke-width="1.8"/><path d="M14.5 2.5v6.5H8z" fill="#bbb"/></svg>
<svg style="position:absolute;left:253px;top:238px" width="8" height="5" viewBox="0 0 8 5"><path d="M0 0h8L4 4.5z" fill="#888"/></svg>
<svg style="position:absolute;left:271px;top:231px" width="18" height="17" viewBox="0 0 18 17"><path d="M14 5A6.5 6.5 0 1 0 15 11" fill="none" stroke="#bbb" stroke-width="1.8"/><path d="M16.5 4.5v6h-6z" fill="#bbb"/></svg>
<div style="position:absolute;left:295px;top:230px;width:1px;height:19px;background:#c4c4c4"></div>
<svg style="position:absolute;left:304px;top:230px" width="13" height="18" viewBox="0 0 13 18"><path d="M1.5 1.5v13l3-3 2.3 5 2.2-1-2.3-4.8h4.5z" fill="#fff" stroke="#666" stroke-width="1"/></svg>
<svg style="position:absolute;left:324px;top:230px" width="10" height="9" viewBox="0 0 10 9"><path d="M1 1.5l3 3-3 3M5 1.5l3 3-3 3" stroke="#555" stroke-width="1.1" fill="none"/></svg>
<div style="position:absolute;left:340px;top:225px;width:1px;height:27px;background:#c4c4c4"></div>
<div style="position:absolute;left:351px;top:229px;width:200px;height:24px;background:#fff;border:1px solid #c8c8c8;border-bottom:none;border-radius:5px 5px 0 0"></div>
<div style="position:absolute;left:551px;top:229px;width:200px;height:23px;background:#efefef;border:1px solid #cdcdcd;border-bottom:none;border-left:none;border-radius:0 5px 0 0"></div>
<div style="position:absolute;left:750px;top:229px;width:200px;height:23px;background:#efefef;border:1px solid #cdcdcd;border-bottom:none;border-radius:5px 5px 0 0"></div>
<svg style="position:absolute;left:358px;top:232px" width="18" height="18" viewBox="0 0 18 18"><path d="M1.5 1.5h8l4 4v11h-12z" fill="#fff" stroke="#999" stroke-width="1"/><path d="M9.5 1.5v4h4" fill="none" stroke="#999" stroke-width="0.9"/><rect x="3" y="8" width="6" height="7" fill="#fff"/><path d="M3 9.5h6M3 11.5h6M3 13.5h6M5 8v7M7 8v7" stroke="#8fcf7a" stroke-width="0.9"/><rect x="9" y="9" width="8" height="8" fill="#217346"/><path d="M11 11l4 4M15 11l-4 4" stroke="#fff" stroke-width="1.2"/></svg>
<div style="position:absolute;left:382px;top:231px;height:20px;line-height:20px;font-size:14px;color:#111;white-space:nowrap;">Annual Overview.xlsx</div>
<svg style="position:absolute;left:527px;top:236px" width="11" height="11" viewBox="0 0 11 11"><path d="M1.5 1.5l8 8M9.5 1.5l-8 8" stroke="#888" stroke-width="1.3"/></svg>
<svg style="position:absolute;left:558px;top:232px" width="18" height="18" viewBox="0 0 18 18"><path d="M1.5 1.5h8l4 4v11h-12z" fill="#fff" stroke="#999" stroke-width="1"/><path d="M9.5 1.5v4h4" fill="none" stroke="#999" stroke-width="0.9"/><rect x="3" y="8" width="6" height="7" fill="#fff"/><path d="M3 9.5h6M3 11.5h6M3 13.5h6M5 8v7M7 8v7" stroke="#8fcf7a" stroke-width="0.9"/><rect x="9" y="9" width="8" height="8" fill="#217346"/><path d="M11 11l4 4M15 11l-4 4" stroke="#fff" stroke-width="1.2"/></svg>
<div style="position:absolute;left:595px;top:232px;height:20px;line-height:20px;font-size:14px;color:#222;white-space:nowrap;">Test Analysis.xlsx</div>
<svg style="position:absolute;left:727px;top:237px" width="11" height="11" viewBox="0 0 11 11"><path d="M1.5 1.5l8 8M9.5 1.5l-8 8" stroke="#999" stroke-width="1.3"/></svg>
<svg style="position:absolute;left:758px;top:232px" width="18" height="18" viewBox="0 0 18 18"><path d="M1.5 1.5h8l4 4v11h-12z" fill="#fff" stroke="#999" stroke-width="1"/><path d="M9.5 1.5v4h4" fill="none" stroke="#999" stroke-width="0.9"/><rect x="3" y="8" width="6" height="7" fill="#fff"/><path d="M3 9.5h6M3 11.5h6M3 13.5h6M5 8v7M7 8v7" stroke="#8fcf7a" stroke-width="0.9"/><rect x="9" y="9" width="8" height="8" fill="#217346"/><path d="M11 11l4 4M15 11l-4 4" stroke="#fff" stroke-width="1.2"/></svg>
<div style="position:absolute;left:794px;top:232px;height:20px;line-height:20px;font-size:14px;color:#222;white-space:nowrap;">Sales Figures.xlsx</div>
<svg style="position:absolute;left:927px;top:237px" width="11" height="11" viewBox="0 0 11 11"><path d="M1.5 1.5l8 8M9.5 1.5l-8 8" stroke="#999" stroke-width="1.3"/></svg>
<div style="position:absolute;left:0px;top:252px;width:1264px;height:20px;background:#efefef"></div>
<div style="position:absolute;left:0px;top:271px;width:1264px;height:1px;background:#b8b8b8"></div>
<div style="position:absolute;left:0px;top:252px;width:1280px;height:1px;background:#c8c8c8"></div>
<div style="position:absolute;left:29px;top:253px;width:20px;height:20px;line-height:20px;text-align:center;white-space:nowrap;color:#111;font-size:14px;">A</div>
<div style="position:absolute;left:49px;top:253px;width:111px;height:20px;line-height:20px;text-align:center;white-space:nowrap;color:#111;font-size:14px;">B</div>
<div style="position:absolute;left:160px;top:253px;width:93px;height:20px;line-height:20px;text-align:center;white-space:nowrap;color:#111;font-size:14px;">C</div>
<div style="position:absolute;left:253px;top:253px;width:93px;height:20px;line-height:20px;text-align:center;white-space:nowrap;color:#111;font-size:14px;">D</div>
<div style="position:absolute;left:346px;top:253px;width:79px;height:20px;line-height:20px;text-align:center;white-space:nowrap;color:#111;font-size:14px;">E</div>
<div style="position:absolute;left:425px;top:253px;width:80px;height:20px;line-height:20px;text-align:center;white-space:nowrap;color:#111;font-size:14px;">F</div>
<div style="position:absolute;left:505px;top:253px;width:85px;height:20px;line-height:20px;text-align:center;white-space:nowrap;color:#111;font-size:14px;">G</div>
<div style="position:absolute;left:590px;top:253px;width:93px;height:20px;line-height:20px;text-align:center;white-space:nowrap;color:#111;font-size:14px;">H</div>
<div style="position:absolute;left:683px;top:253px;width:93px;height:20px;line-height:20px;text-align:center;white-space:nowrap;color:#111;font-size:14px;">I</div>
<div style="position:absolute;left:776px;top:253px;width:93px;height:20px;line-height:20px;text-align:center;white-space:nowrap;color:#111;font-size:14px;">J</div>
<div style="position:absolute;left:869px;top:253px;width:93px;height:20px;line-height:20px;text-align:center;white-space:nowrap;color:#111;font-size:14px;">K</div>
<div style="position:absolute;left:962px;top:253px;width:93px;height:20px;line-height:20px;text-align:center;white-space:nowrap;color:#111;font-size:14px;">L</div>
<div style="position:absolute;left:1055px;top:253px;width:93px;height:20px;line-height:20px;text-align:center;white-space:nowrap;color:#111;font-size:14px;">M</div>
<div style="position:absolute;left:1148px;top:253px;width:93px;height:20px;line-height:20px;text-align:center;white-space:nowrap;color:#111;font-size:14px;">N</div>
<div style="position:absolute;left:29px;top:252px;width:1px;height:20px;background:#c4c4c4"></div>
<div style="position:absolute;left:49px;top:252px;width:1px;height:20px;background:#c4c4c4"></div>
<div style="position:absolute;left:160px;top:252px;width:1px;height:20px;background:#c4c4c4"></div>
<div style="position:absolute;left:253px;top:252px;width:1px;height:20px;background:#c4c4c4"></div>
<div style="position:absolute;left:346px;top:252px;width:1px;height:20px;background:#c4c4c4"></div>
<div style="position:absolute;left:425px;top:252px;width:1px;height:20px;background:#c4c4c4"></div>
<div style="position:absolute;left:505px;top:252px;width:1px;height:20px;background:#c4c4c4"></div>
<div style="position:absolute;left:590px;top:252px;width:1px;height:20px;background:#c4c4c4"></div>
<div style="position:absolute;left:683px;top:252px;width:1px;height:20px;background:#c4c4c4"></div>
<div style="position:absolute;left:776px;top:252px;width:1px;height:20px;background:#c4c4c4"></div>
<div style="position:absolute;left:869px;top:252px;width:1px;height:20px;background:#c4c4c4"></div>
<div style="position:absolute;left:962px;top:252px;width:1px;height:20px;background:#c4c4c4"></div>
<div style="position:absolute;left:1055px;top:252px;width:1px;height:20px;background:#c4c4c4"></div>
<div style="position:absolute;left:1148px;top:252px;width:1px;height:20px;background:#c4c4c4"></div>
<div style="position:absolute;left:1241px;top:252px;width:1px;height:20px;background:#c4c4c4"></div>
<div style="position:absolute;left:0px;top:272px;width:29px;height:477px;background:#efefef"></div>
<div style="position:absolute;left:28px;top:272px;width:1px;height:477px;background:#b8b8b8"></div>
<div style="position:absolute;left:0px;top:308px;width:28px;height:21px;line-height:21px;text-align:center;white-space:nowrap;color:#111;font-size:14px;">1</div>
<div style="position:absolute;left:0px;top:328px;width:28px;height:1px;background:#c4c4c4"></div>
<div style="position:absolute;left:0px;top:338px;width:28px;height:21px;line-height:21px;text-align:center;white-space:nowrap;color:#111;font-size:14px;">2</div>
<div style="position:absolute;left:0px;top:358px;width:28px;height:1px;background:#c4c4c4"></div>
<div style="position:absolute;left:0px;top:367px;width:28px;height:21px;line-height:21px;text-align:center;white-space:nowrap;color:#111;font-size:14px;">3</div>
<div style="position:absolute;left:0px;top:387px;width:28px;height:1px;background:#c4c4c4"></div>
<div style="position:absolute;left:0px;top:396px;width:28px;height:21px;line-height:21px;text-align:center;white-space:nowrap;color:#111;font-size:14px;">4</div>
<div style="position:absolute;left:0px;top:416px;width:28px;height:1px;background:#c4c4c4"></div>
<div style="position:absolute;left:0px;top:420px;width:28px;height:21px;line-height:21px;text-align:center;white-space:nowrap;color:#111;font-size:14px;">5</div>
<div style="position:absolute;left:0px;top:440px;width:28px;height:1px;background:#c4c4c4"></div>
<div style="position:absolute;left:0px;top:442px;width:28px;height:21px;line-height:21px;text-align:center;white-space:nowrap;color:#111;font-size:14px;">6</div>
<div style="position:absolute;left:0px;top:462px;width:28px;height:1px;background:#c4c4c4"></div>
<div style="position:absolute;left:0px;top:464px;width:28px;height:21px;line-height:21px;text-align:center;white-space:nowrap;color:#111;font-size:14px;">7</div>
<div style="position:absolute;left:0px;top:484px;width:28px;height:1px;background:#c4c4c4"></div>
<div style="position:absolute;left:0px;top:486px;width:28px;height:21px;line-height:21px;text-align:center;white-space:nowrap;color:#111;font-size:14px;">8</div>
<div style="position:absolute;left:0px;top:506px;width:28px;height:1px;background:#c4c4c4"></div>
<div style="position:absolute;left:0px;top:508px;width:28px;height:21px;line-height:21px;text-align:center;white-space:nowrap;color:#111;font-size:14px;">9</div>
<div style="position:absolute;left:0px;top:528px;width:28px;height:1px;background:#c4c4c4"></div>
<div style="position:absolute;left:0px;top:530px;width:28px;height:21px;line-height:21px;text-align:center;white-space:nowrap;color:#111;font-size:14px;">10</div>
<div style="position:absolute;left:0px;top:550px;width:28px;height:1px;background:#c4c4c4"></div>
<div style="position:absolute;left:0px;top:552px;width:28px;height:21px;line-height:21px;text-align:center;white-space:nowrap;color:#111;font-size:14px;">11</div>
<div style="position:absolute;left:0px;top:572px;width:28px;height:1px;background:#c4c4c4"></div>
<div style="position:absolute;left:0px;top:574px;width:28px;height:21px;line-height:21px;text-align:center;white-space:nowrap;color:#111;font-size:14px;">12</div>
<div style="position:absolute;left:0px;top:594px;width:28px;height:1px;background:#c4c4c4"></div>
<div style="position:absolute;left:0px;top:596px;width:28px;height:21px;line-height:21px;text-align:center;white-space:nowrap;color:#111;font-size:14px;">13</div>
<div style="position:absolute;left:0px;top:616px;width:28px;height:1px;background:#c4c4c4"></div>
<div style="position:absolute;left:0px;top:618px;width:28px;height:21px;line-height:21px;text-align:center;white-space:nowrap;color:#111;font-size:14px;">14</div>
<div style="position:absolute;left:0px;top:638px;width:28px;height:1px;background:#c4c4c4"></div>
<div style="position:absolute;left:0px;top:640px;width:28px;height:21px;line-height:21px;text-align:center;white-space:nowrap;color:#111;font-size:14px;">15</div>
<div style="position:absolute;left:0px;top:660px;width:28px;height:1px;background:#c4c4c4"></div>
<div style="position:absolute;left:0px;top:662px;width:28px;height:21px;line-height:21px;text-align:center;white-space:nowrap;color:#111;font-size:14px;">16</div>
<div style="position:absolute;left:0px;top:682px;width:28px;height:1px;background:#c4c4c4"></div>
<div style="position:absolute;left:0px;top:684px;width:28px;height:21px;line-height:21px;text-align:center;white-space:nowrap;color:#111;font-size:14px;">17</div>
<div style="position:absolute;left:0px;top:704px;width:28px;height:1px;background:#c4c4c4"></div>
<div style="position:absolute;left:0px;top:706px;width:28px;height:21px;line-height:21px;text-align:center;white-space:nowrap;color:#111;font-size:14px;">18</div>
<div style="position:absolute;left:0px;top:726px;width:28px;height:1px;background:#c4c4c4"></div>
<div style="position:absolute;left:0px;top:728px;width:28px;height:21px;line-height:21px;text-align:center;white-space:nowrap;color:#111;font-size:14px;">19</div>
<div style="position:absolute;left:0px;top:748px;width:28px;height:1px;background:#c4c4c4"></div>
<div style="position:absolute;left:29px;top:272px;width:1235px;height:477px;background:#fff"></div>
<div style="position:absolute;left:440px;top:272px;width:400px;height:56px;"><div id="title" style="position:absolute;left:0;top:0;width:400px;text-align:center;font-weight:bold;font-size:41px;line-height:52px;color:#000;transform:scaleX(0.929);">Annual Overview</div></div>
<div style="position:absolute;left:158px;top:327px;width:1085px;height:33px;background:#000"></div>
<div style="position:absolute;left:47px;top:357px;width:114px;height:61px;background:#000"></div>
<div style="position:absolute;left:158px;top:357px;width:1084px;height:60px;background:#000"></div>
<div style="position:absolute;left:162px;top:330px;width:90px;height:27px;background:#5c5cff;color:#fff;font-size:16px;line-height:26px;text-align:center;white-space:nowrap">January</div>
<div style="position:absolute;left:162px;top:360px;width:90px;height:26px;background:#fff"></div>
<div style="position:absolute;left:160px;top:360px;width:88px;height:26px;line-height:24px;text-align:right;font-size:17.5px;color:#000;white-space:nowrap">1490</div>
<svg style="position:absolute;left:165px;top:361px" width="22" height="21" viewBox="0 0 22 21"><rect x="0.7" y="13.5" width="2.6" height="6.5" fill="#3c74ac" stroke="#2f5f90" stroke-width="0.5"/><rect x="5.7" y="9" width="2.6" height="11" fill="#3c74ac" stroke="#2f5f90" stroke-width="0.5"/><rect x="10.7" y="5" width="2.6" height="15" fill="#3c74ac" stroke="#2f5f90" stroke-width="0.5"/><rect x="15.7" y="1" width="2.6" height="19" fill="#dedede" stroke="#acacac" stroke-width="0.7"/></svg>
<div style="position:absolute;left:162px;top:388px;width:90px;height:27px;background:#fff"></div>
<div style="position:absolute;left:160px;top:388px;width:88px;height:27px;line-height:25px;text-align:right;font-size:17.5px;color:#000;white-space:nowrap">800</div>
<svg style="position:absolute;left:165px;top:390px" width="22" height="21" viewBox="0 0 22 21"><rect x="0.7" y="13.5" width="2.6" height="6.5" fill="#3c74ac" stroke="#2f5f90" stroke-width="0.5"/><rect x="5.7" y="9" width="2.6" height="11" fill="#dedede" stroke="#acacac" stroke-width="0.7"/><rect x="10.7" y="5" width="2.6" height="15" fill="#dedede" stroke="#acacac" stroke-width="0.7"/><rect x="15.7" y="1" width="2.6" height="19" fill="#dedede" stroke="#acacac" stroke-width="0.7"/></svg>
<div style="position:absolute;left:255px;top:330px;width:90px;height:27px;background:#5c5cff;color:#fff;font-size:16px;line-height:26px;text-align:center;white-space:nowrap">February</div>
<div style="position:absolute;left:255px;top:360px;width:90px;height:26px;background:#fff"></div>
<div style="position:absolute;left:253px;top:360px;width:88px;height:26px;line-height:24px;text-align:right;font-size:17.5px;color:#000;white-space:nowrap">1020</div>
<svg style="position:absolute;left:258px;top:361px" width="22" height="21" viewBox="0 0 22 21"><rect x="0.7" y="13.5" width="2.6" height="6.5" fill="#3c74ac" stroke="#2f5f90" stroke-width="0.5"/><rect x="5.7" y="9" width="2.6" height="11" fill="#3c74ac" stroke="#2f5f90" stroke-width="0.5"/><rect x="10.7" y="5" width="2.6" height="15" fill="#dedede" stroke="#acacac" stroke-width="0.7"/><rect x="15.7" y="1" width="2.6" height="19" fill="#dedede" stroke="#acacac" stroke-width="0.7"/></svg>
<div style="position:absolute;left:255px;top:388px;width:90px;height:27px;background:#fff"></div>
<div style="position:absolute;left:253px;top:388px;width:88px;height:27px;line-height:25px;text-align:right;font-size:17.5px;color:#000;white-space:nowrap">350</div>
<svg style="position:absolute;left:258px;top:390px" width="22" height="21" viewBox="0 0 22 21"><rect x="0.7" y="13.5" width="2.6" height="6.5" fill="#dedede" stroke="#acacac" stroke-width="0.7"/><rect x="5.7" y="9" width="2.6" height="11" fill="#dedede" stroke="#acacac" stroke-width="0.7"/><rect x="10.7" y="5" width="2.6" height="15" fill="#dedede" stroke="#acacac" stroke-width="0.7"/><rect x="15.7" y="1" width="2.6" height="19" fill="#dedede" stroke="#acacac" stroke-width="0.7"/></svg>
<div style="position:absolute;left:348px;top:330px;width:76px;height:27px;background:#5c5cff;color:#fff;font-size:16px;line-height:26px;text-align:center;white-space:nowrap">March</div>
<div style="position:absolute;left:348px;top:360px;width:76px;height:26px;background:#fff"></div>
<div style="position:absolute;left:346px;top:360px;width:74px;height:26px;line-height:24px;text-align:right;font-size:17.5px;color:#000;white-space:nowrap">160</div>
<svg style="position:absolute;left:351px;top:361px" width="22" height="21" viewBox="0 0 22 21"><rect x="0.7" y="13.5" width="2.6" height="6.5" fill="#dedede" stroke="#acacac" stroke-width="0.7"/><rect x="5.7" y="9" width="2.6" height="11" fill="#dedede" stroke="#acacac" stroke-width="0.7"/><rect x="10.7" y="5" width="2.6" height="15" fill="#dedede" stroke="#acacac" stroke-width="0.7"/><rect x="15.7" y="1" width="2.6" height="19" fill="#dedede" stroke="#acacac" stroke-width="0.7"/></svg>
<div style="position:absolute;left:348px;top:388px;width:76px;height:27px;background:#fff"></div>
<div style="position:absolute;left:346px;top:388px;width:74px;height:27px;line-height:25px;text-align:right;font-size:17.5px;color:#000;white-space:nowrap">360</div>
<svg style="position:absolute;left:351px;top:390px" width="22" height="21" viewBox="0 0 22 21"><rect x="0.7" y="13.5" width="2.6" height="6.5" fill="#dedede" stroke="#acacac" stroke-width="0.7"/><rect x="5.7" y="9" width="2.6" height="11" fill="#dedede" stroke="#acacac" stroke-width="0.7"/><rect x="10.7" y="5" width="2.6" height="15" fill="#dedede" stroke="#acacac" stroke-width="0.7"/><rect x="15.7" y="1" width="2.6" height="19" fill="#dedede" stroke="#acacac" stroke-width="0.7"/></svg>
<div style="position:absolute;left:427px;top:330px;width:77px;height:27px;background:#5c5cff;color:#fff;font-size:16px;line-height:26px;text-align:center;white-space:nowrap">April</div>
<div style="position:absolute;left:427px;top:360px;width:77px;height:26px;background:#fff"></div>
<div style="position:absolute;left:425px;top:360px;width:75px;height:26px;line-height:24px;text-align:right;font-size:17.5px;color:#000;white-space:nowrap">360</div>
<svg style="position:absolute;left:430px;top:361px" width="22" height="21" viewBox="0 0 22 21"><rect x="0.7" y="13.5" width="2.6" height="6.5" fill="#dedede" stroke="#acacac" stroke-width="0.7"/><rect x="5.7" y="9" width="2.6" height="11" fill="#dedede" stroke="#acacac" stroke-width="0.7"/><rect x="10.7" y="5" width="2.6" height="15" fill="#dedede" stroke="#acacac" stroke-width="0.7"/><rect x="15.7" y="1" width="2.6" height="19" fill="#dedede" stroke="#acacac" stroke-width="0.7"/></svg>
<div style="position:absolute;left:427px;top:388px;width:77px;height:27px;background:#fff"></div>
<div style="position:absolute;left:425px;top:388px;width:75px;height:27px;line-height:25px;text-align:right;font-size:17.5px;color:#000;white-space:nowrap">280</div>
<svg style="position:absolute;left:430px;top:390px" width="22" height="21" viewBox="0 0 22 21"><rect x="0.7" y="13.5" width="2.6" height="6.5" fill="#dedede" stroke="#acacac" stroke-width="0.7"/><rect x="5.7" y="9" width="2.6" height="11" fill="#dedede" stroke="#acacac" stroke-width="0.7"/><rect x="10.7" y="5" width="2.6" height="15" fill="#dedede" stroke="#acacac" stroke-width="0.7"/><rect x="15.7" y="1" width="2.6" height="19" fill="#dedede" stroke="#acacac" stroke-width="0.7"/></svg>
<div style="position:absolute;left:507px;top:330px;width:82px;height:27px;background:#5c5cff;color:#fff;font-size:16px;line-height:26px;text-align:center;white-space:nowrap">May</div>
<div style="position:absolute;left:507px;top:360px;width:82px;height:26px;background:#fff"></div>
<div style="position:absolute;left:505px;top:360px;width:80px;height:26px;line-height:24px;text-align:right;font-size:17.5px;color:#000;white-space:nowrap">920</div>
<svg style="position:absolute;left:510px;top:361px" width="22" height="21" viewBox="0 0 22 21"><rect x="0.7" y="13.5" width="2.6" height="6.5" fill="#3c74ac" stroke="#2f5f90" stroke-width="0.5"/><rect x="5.7" y="9" width="2.6" height="11" fill="#3c74ac" stroke="#2f5f90" stroke-width="0.5"/><rect x="10.7" y="5" width="2.6" height="15" fill="#dedede" stroke="#acacac" stroke-width="0.7"/><rect x="15.7" y="1" width="2.6" height="19" fill="#dedede" stroke="#acacac" stroke-width="0.7"/></svg>
<div style="position:absolute;left:507px;top:388px;width:82px;height:27px;background:#fff"></div>
<div style="position:absolute;left:505px;top:388px;width:80px;height:27px;line-height:25px;text-align:right;font-size:17.5px;color:#000;white-space:nowrap">520</div>
<svg style="position:absolute;left:510px;top:390px" width="22" height="21" viewBox="0 0 22 21"><rect x="0.7" y="13.5" width="2.6" height="6.5" fill="#3c74ac" stroke="#2f5f90" stroke-width="0.5"/><rect x="5.7" y="9" width="2.6" height="11" fill="#dedede" stroke="#acacac" stroke-width="0.7"/><rect x="10.7" y="5" width="2.6" height="15" fill="#dedede" stroke="#acacac" stroke-width="0.7"/><rect x="15.7" y="1" width="2.6" height="19" fill="#dedede" stroke="#acacac" stroke-width="0.7"/></svg>
<div style="position:absolute;left:592px;top:330px;width:90px;height:27px;background:#5c5cff;color:#fff;font-size:16px;line-height:26px;text-align:center;white-space:nowrap">June</div>
<div style="position:absolute;left:592px;top:360px;width:90px;height:26px;background:#fff"></div>
<div style="position:absolute;left:590px;top:360px;width:88px;height:26px;line-height:24px;text-align:right;font-size:17.5px;color:#000;white-space:nowrap">490</div>
<svg style="position:absolute;left:595px;top:361px" width="22" height="21" viewBox="0 0 22 21"><rect x="0.7" y="13.5" width="2.6" height="6.5" fill="#3c74ac" stroke="#2f5f90" stroke-width="0.5"/><rect x="5.7" y="9" width="2.6" height="11" fill="#dedede" stroke="#acacac" stroke-width="0.7"/><rect x="10.7" y="5" width="2.6" height="15" fill="#dedede" stroke="#acacac" stroke-width="0.7"/><rect x="15.7" y="1" width="2.6" height="19" fill="#dedede" stroke="#acacac" stroke-width="0.7"/></svg>
<div style="position:absolute;left:592px;top:388px;width:90px;height:27px;background:#fff"></div>
<div style="position:absolute;left:590px;top:388px;width:88px;height:27px;line-height:25px;text-align:right;font-size:17.5px;color:#000;white-space:nowrap">290</div>
<svg style="position:absolute;left:595px;top:390px" width="22" height="21" viewBox="0 0 22 21"><rect x="0.7" y="13.5" width="2.6" height="6.5" fill="#dedede" stroke="#acacac" stroke-width="0.7"/><rect x="5.7" y="9" width="2.6" height="11" fill="#dedede" stroke="#acacac" stroke-width="0.7"/><rect x="10.7" y="5" width="2.6" height="15" fill="#dedede" stroke="#acacac" stroke-width="0.7"/><rect x="15.7" y="1" width="2.6" height="19" fill="#dedede" stroke="#acacac" stroke-width="0.7"/></svg>
<div style="position:absolute;left:685px;top:330px;width:90px;height:27px;background:#5c5cff;color:#fff;font-size:16px;line-height:26px;text-align:center;white-space:nowrap">July</div>
<div style="position:absolute;left:685px;top:360px;width:90px;height:26px;background:#fff"></div>
<div style="position:absolute;left:683px;top:360px;width:88px;height:26px;line-height:24px;text-align:right;font-size:17.5px;color:#000;white-space:nowrap">280</div>
<svg style="position:absolute;left:688px;top:361px" width="22" height="21" viewBox="0 0 22 21"><rect x="0.7" y="13.5" width="2.6" height="6.5" fill="#dedede" stroke="#acacac" stroke-width="0.7"/><rect x="5.7" y="9" width="2.6" height="11" fill="#dedede" stroke="#acacac" stroke-width="0.7"/><rect x="10.7" y="5" width="2.6" height="15" fill="#dedede" stroke="#acacac" stroke-width="0.7"/><rect x="15.7" y="1" width="2.6" height="19" fill="#dedede" stroke="#acacac" stroke-width="0.7"/></svg>
<div style="position:absolute;left:685px;top:388px;width:90px;height:27px;background:#fff"></div>
<div style="position:absolute;left:683px;top:388px;width:88px;height:27px;line-height:25px;text-align:right;font-size:17.5px;color:#000;white-space:nowrap">450</div>
<svg style="position:absolute;left:688px;top:390px" width="22" height="21" viewBox="0 0 22 21"><rect x="0.7" y="13.5" width="2.6" height="6.5" fill="#dedede" stroke="#acacac" stroke-width="0.7"/><rect x="5.7" y="9" width="2.6" height="11" fill="#dedede" stroke="#acacac" stroke-width="0.7"/><rect x="10.7" y="5" width="2.6" height="15" fill="#dedede" stroke="#acacac" stroke-width="0.7"/><rect x="15.7" y="1" width="2.6" height="19" fill="#dedede" stroke="#acacac" stroke-width="0.7"/></svg>
<div style="position:absolute;left:778px;top:330px;width:90px;height:27px;background:#5c5cff;color:#fff;font-size:16px;line-height:26px;text-align:center;white-space:nowrap">August</div>
<div style="position:absolute;left:778px;top:360px;width:90px;height:26px;background:#fff"></div>
<div style="position:absolute;left:776px;top:360px;width:88px;height:26px;line-height:24px;text-align:right;font-size:17.5px;color:#000;white-space:nowrap">920</div>
<svg style="position:absolute;left:781px;top:361px" width="22" height="21" viewBox="0 0 22 21"><rect x="0.7" y="13.5" width="2.6" height="6.5" fill="#3c74ac" stroke="#2f5f90" stroke-width="0.5"/><rect x="5.7" y="9" width="2.6" height="11" fill="#3c74ac" stroke="#2f5f90" stroke-width="0.5"/><rect x="10.7" y="5" width="2.6" height="15" fill="#dedede" stroke="#acacac" stroke-width="0.7"/><rect x="15.7" y="1" width="2.6" height="19" fill="#dedede" stroke="#acacac" stroke-width="0.7"/></svg>
<div style="position:absolute;left:778px;top:388px;width:90px;height:27px;background:#fff"></div>
<div style="position:absolute;left:776px;top:388px;width:88px;height:27px;line-height:25px;text-align:right;font-size:17.5px;color:#000;white-space:nowrap">604</div>
<svg style="position:absolute;left:781px;top:390px" width="22" height="21" viewBox="0 0 22 21"><rect x="0.7" y="13.5" width="2.6" height="6.5" fill="#3c74ac" stroke="#2f5f90" stroke-width="0.5"/><rect x="5.7" y="9" width="2.6" height="11" fill="#dedede" stroke="#acacac" stroke-width="0.7"/><rect x="10.7" y="5" width="2.6" height="15" fill="#dedede" stroke="#acacac" stroke-width="0.7"/><rect x="15.7" y="1" width="2.6" height="19" fill="#dedede" stroke="#acacac" stroke-width="0.7"/></svg>
<div style="position:absolute;left:871px;top:330px;width:90px;height:27px;background:#5c5cff;color:#fff;font-size:16px;line-height:26px;text-align:center;white-space:nowrap">September</div>
<div style="position:absolute;left:871px;top:360px;width:90px;height:26px;background:#fff"></div>
<div style="position:absolute;left:869px;top:360px;width:88px;height:26px;line-height:24px;text-align:right;font-size:17.5px;color:#000;white-space:nowrap">111</div>
<svg style="position:absolute;left:874px;top:361px" width="22" height="21" viewBox="0 0 22 21"><rect x="0.7" y="13.5" width="2.6" height="6.5" fill="#dedede" stroke="#acacac" stroke-width="0.7"/><rect x="5.7" y="9" width="2.6" height="11" fill="#dedede" stroke="#acacac" stroke-width="0.7"/><rect x="10.7" y="5" width="2.6" height="15" fill="#dedede" stroke="#acacac" stroke-width="0.7"/><rect x="15.7" y="1" width="2.6" height="19" fill="#dedede" stroke="#acacac" stroke-width="0.7"/></svg>
<div style="position:absolute;left:871px;top:388px;width:90px;height:27px;background:#fff"></div>
<div style="position:absolute;left:869px;top:388px;width:88px;height:27px;line-height:25px;text-align:right;font-size:17.5px;color:#000;white-space:nowrap">780</div>
<svg style="position:absolute;left:874px;top:390px" width="22" height="21" viewBox="0 0 22 21"><rect x="0.7" y="13.5" width="2.6" height="6.5" fill="#3c74ac" stroke="#2f5f90" stroke-width="0.5"/><rect x="5.7" y="9" width="2.6" height="11" fill="#dedede" stroke="#acacac" stroke-width="0.7"/><rect x="10.7" y="5" width="2.6" height="15" fill="#dedede" stroke="#acacac" stroke-width="0.7"/><rect x="15.7" y="1" width="2.6" height="19" fill="#dedede" stroke="#acacac" stroke-width="0.7"/></svg>
<div style="position:absolute;left:964px;top:330px;width:90px;height:27px;background:#5c5cff;color:#fff;font-size:16px;line-height:26px;text-align:center;white-space:nowrap">October</div>
<div style="position:absolute;left:964px;top:360px;width:90px;height:26px;background:#fff"></div>
<div style="position:absolute;left:962px;top:360px;width:88px;height:26px;line-height:24px;text-align:right;font-size:17.5px;color:#000;white-space:nowrap">830</div>
<svg style="position:absolute;left:967px;top:361px" width="22" height="21" viewBox="0 0 22 21"><rect x="0.7" y="13.5" width="2.6" height="6.5" fill="#3c74ac" stroke="#2f5f90" stroke-width="0.5"/><rect x="5.7" y="9" width="2.6" height="11" fill="#3c74ac" stroke="#2f5f90" stroke-width="0.5"/><rect x="10.7" y="5" width="2.6" height="15" fill="#dedede" stroke="#acacac" stroke-width="0.7"/><rect x="15.7" y="1" width="2.6" height="19" fill="#dedede" stroke="#acacac" stroke-width="0.7"/></svg>
<div style="position:absolute;left:964px;top:388px;width:90px;height:27px;background:#fff"></div>
<div style="position:absolute;left:962px;top:388px;width:88px;height:27px;line-height:25px;text-align:right;font-size:17.5px;color:#000;white-space:nowrap">340</div>
<svg style="position:absolute;left:967px;top:390px" width="22" height="21" viewBox="0 0 22 21"><rect x="0.7" y="13.5" width="2.6" height="6.5" fill="#dedede" stroke="#acacac" stroke-width="0.7"/><rect x="5.7" y="9" width="2.6" height="11" fill="#dedede" stroke="#acacac" stroke-width="0.7"/><rect x="10.7" y="5" width="2.6" height="15" fill="#dedede" stroke="#acacac" stroke-width="0.7"/><rect x="15.7" y="1" width="2.6" height="19" fill="#dedede" stroke="#acacac" stroke-width="0.7"/></svg>
<div style="position:absolute;left:1057px;top:330px;width:90px;height:27px;background:#5c5cff;color:#fff;font-size:16px;line-height:26px;text-align:center;white-space:nowrap">November</div>
<div style="position:absolute;left:1057px;top:360px;width:90px;height:26px;background:#fff"></div>
<div style="position:absolute;left:1055px;top:360px;width:88px;height:26px;line-height:24px;text-align:right;font-size:17.5px;color:#000;white-space:nowrap">650</div>
<svg style="position:absolute;left:1060px;top:361px" width="22" height="21" viewBox="0 0 22 21"><rect x="0.7" y="13.5" width="2.6" height="6.5" fill="#3c74ac" stroke="#2f5f90" stroke-width="0.5"/><rect x="5.7" y="9" width="2.6" height="11" fill="#dedede" stroke="#acacac" stroke-width="0.7"/><rect x="10.7" y="5" width="2.6" height="15" fill="#dedede" stroke="#acacac" stroke-width="0.7"/><rect x="15.7" y="1" width="2.6" height="19" fill="#dedede" stroke="#acacac" stroke-width="0.7"/></svg>
<div style="position:absolute;left:1057px;top:388px;width:90px;height:27px;background:#fff"></div>
<div style="position:absolute;left:1055px;top:388px;width:88px;height:27px;line-height:25px;text-align:right;font-size:17.5px;color:#000;white-space:nowrap">590</div>
<svg style="position:absolute;left:1060px;top:390px" width="22" height="21" viewBox="0 0 22 21"><rect x="0.7" y="13.5" width="2.6" height="6.5" fill="#3c74ac" stroke="#2f5f90" stroke-width="0.5"/><rect x="5.7" y="9" width="2.6" height="11" fill="#dedede" stroke="#acacac" stroke-width="0.7"/><rect x="10.7" y="5" width="2.6" height="15" fill="#dedede" stroke="#acacac" stroke-width="0.7"/><rect x="15.7" y="1" width="2.6" height="19" fill="#dedede" stroke="#acacac" stroke-width="0.7"/></svg>
<div style="position:absolute;left:1150px;top:330px;width:90px;height:27px;background:#5c5cff;color:#fff;font-size:16px;line-height:26px;text-align:center;white-space:nowrap">December</div>
<div style="position:absolute;left:1150px;top:360px;width:90px;height:26px;background:#fff"></div>
<div style="position:absolute;left:1148px;top:360px;width:88px;height:26px;line-height:24px;text-align:right;font-size:17.5px;color:#000;white-space:nowrap">1860</div>
<svg style="position:absolute;left:1153px;top:361px" width="22" height="21" viewBox="0 0 22 21"><rect x="0.7" y="13.5" width="2.6" height="6.5" fill="#3c74ac" stroke="#2f5f90" stroke-width="0.5"/><rect x="5.7" y="9" width="2.6" height="11" fill="#3c74ac" stroke="#2f5f90" stroke-width="0.5"/><rect x="10.7" y="5" width="2.6" height="15" fill="#3c74ac" stroke="#2f5f90" stroke-width="0.5"/><rect x="15.7" y="1" width="2.6" height="19" fill="#3c74ac" stroke="#2f5f90" stroke-width="0.5"/></svg>
<div style="position:absolute;left:1150px;top:388px;width:90px;height:27px;background:#fff"></div>
<div style="position:absolute;left:1148px;top:388px;width:88px;height:27px;line-height:25px;text-align:right;font-size:17.5px;color:#000;white-space:nowrap">1450</div>
<svg style="position:absolute;left:1153px;top:390px" width="22" height="21" viewBox="0 0 22 21"><rect x="0.7" y="13.5" width="2.6" height="6.5" fill="#3c74ac" stroke="#2f5f90" stroke-width="0.5"/><rect x="5.7" y="9" width="2.6" height="11" fill="#3c74ac" stroke="#2f5f90" stroke-width="0.5"/><rect x="10.7" y="5" width="2.6" height="15" fill="#3c74ac" stroke="#2f5f90" stroke-width="0.5"/><rect x="15.7" y="1" width="2.6" height="19" fill="#dedede" stroke="#acacac" stroke-width="0.7"/></svg>
<div style="position:absolute;left:50px;top:360px;width:108px;height:26px;background:#5c5cff"></div>
<div style="position:absolute;left:50px;top:388px;width:108px;height:27px;background:#5c5cff"></div>
<div style="position:absolute;left:51px;top:360px;height:26px;line-height:24px;font-size:16px;color:#fff;white-space:nowrap">Current</div>
<div style="position:absolute;left:51px;top:388px;height:27px;line-height:25px;font-size:16px;color:#fff;white-space:nowrap">Previous Year</div>
<svg style="position:absolute;left:44px;top:438px" width="1197" height="311" viewBox="0 0 1197 311"><defs>
<linearGradient id="gl" gradientUnits="userSpaceOnUse" x1="0" y1="42" x2="0" y2="307">
<stop offset="0" stop-color="#f9a75a"/><stop offset="0.23" stop-color="#f9a060"/><stop offset="0.49" stop-color="#f98a86"/><stop offset="0.75" stop-color="#f87fa8"/><stop offset="1" stop-color="#f070c8"/></linearGradient>
<linearGradient id="gd" gradientUnits="userSpaceOnUse" x1="0" y1="100" x2="0" y2="307">
<stop offset="0" stop-color="#b0785a"/><stop offset="0.5" stop-color="#b46a92"/><stop offset="1" stop-color="#b65cc2"/></linearGradient>
<clipPath id="cprev"><polygon points="62.20,306.90 62.20,192.88 159.75,257.01 257.29,255.59 354.83,266.99 452.38,232.78 549.93,265.57 647.47,242.76 745.02,220.81 842.56,195.73 940.11,258.44 1037.65,222.81 1135.20,100.23 1135.20,306.90"/></clipPath>
<filter id="sh" x="-50%" y="-50%" width="200%" height="200%"><feGaussianBlur in="SourceAlpha" stdDeviation="2.5"/><feOffset dx="0" dy="2"/><feComponentTransfer><feFuncA type="linear" slope="0.55"/></feComponentTransfer><feMerge><feMergeNode/><feMergeNode in="SourceGraphic"/></feMerge></filter>
<linearGradient id="lab" x1="0" y1="0" x2="0" y2="1"><stop offset="0" stop-color="#777"/><stop offset="0.62" stop-color="#000"/><stop offset="1" stop-color="#000"/></linearGradient>
</defs>
<rect x="0" y="0" width="1197" height="311" fill="#f0f4fb"/>
<polygon points="62.20,306.90 62.20,192.88 159.75,257.01 257.29,255.59 354.83,266.99 452.38,232.78 549.93,265.57 647.47,242.76 745.02,220.81 842.56,195.73 940.11,258.44 1037.65,222.81 1135.20,100.23 1135.20,306.90" fill="#0093c8"/>
<polygon points="62.20,306.90 62.20,94.53 159.75,161.52 257.29,284.10 354.83,255.59 452.38,175.77 549.93,237.06 647.47,266.99 745.02,175.77 842.56,291.08 940.11,188.60 1037.65,214.26 1135.20,41.79 1135.20,306.90" fill="url(#gl)"/>
<polygon points="62.20,306.90 62.20,94.53 159.75,161.52 257.29,284.10 354.83,255.59 452.38,175.77 549.93,237.06 647.47,266.99 745.02,175.77 842.56,291.08 940.11,188.60 1037.65,214.26 1135.20,41.79 1135.20,306.90" fill="url(#gd)" clip-path="url(#cprev)"/>
<polyline points="62.20,94.53 159.75,161.52 257.29,284.10 354.83,255.59 452.38,175.77 549.93,237.06 647.47,266.99 745.02,175.77 842.56,291.08 940.11,188.60 1037.65,214.26 1135.20,41.79" fill="none" stroke="#0000ff" stroke-width="1.1"/>
<polygon points="62.20,81.03 75.80,108.33 48.60,108.33" fill="#0000ff"/><polygon points="159.75,148.02 173.34,175.32 146.15,175.32" fill="#0000ff"/><polygon points="257.29,270.60 270.89,297.90 243.69,297.90" fill="#0000ff"/><polygon points="354.83,242.09 368.44,269.39 341.23,269.39" fill="#0000ff"/><polygon points="452.38,162.27 465.98,189.57 438.78,189.57" fill="#0000ff"/><polygon points="549.93,223.56 563.53,250.86 536.33,250.86" fill="#0000ff"/><polygon points="647.47,253.49 661.07,280.79 633.87,280.79" fill="#0000ff"/><polygon points="745.02,162.27 758.62,189.57 731.42,189.57" fill="#0000ff"/><polygon points="842.56,277.58 856.16,304.88 828.96,304.88" fill="#0000ff"/><polygon points="940.11,175.10 953.71,202.40 926.50,202.40" fill="#0000ff"/><polygon points="1037.65,200.76 1051.25,228.06 1024.05,228.06" fill="#0000ff"/><polygon points="1135.20,28.29 1148.80,55.59 1121.60,55.59" fill="#0000ff"/><g filter="url(#sh)"><rect x="42.20" y="62.53" width="40" height="28" fill="url(#lab)"/></g><text x="62.20" y="81.13" fill="#fff" font-size="12.5" font-family="Liberation Sans" text-anchor="middle">1490</text><g filter="url(#sh)"><rect x="139.75" y="129.52" width="40" height="28" fill="url(#lab)"/></g><text x="159.75" y="148.12" fill="#fff" font-size="12.5" font-family="Liberation Sans" text-anchor="middle">1020</text><g filter="url(#sh)"><rect x="240.79" y="252.10" width="33" height="28" fill="url(#lab)"/></g><text x="257.29" y="270.70" fill="#fff" font-size="12.5" font-family="Liberation Sans" text-anchor="middle">160</text><g filter="url(#sh)"><rect x="338.33" y="223.59" width="33" height="28" fill="url(#lab)"/></g><text x="354.83" y="242.19" fill="#fff" font-size="12.5" font-family="Liberation Sans" text-anchor="middle">360</text><g filter="url(#sh)"><rect x="435.88" y="143.77" width="33" height="28" fill="url(#lab)"/></g><text x="452.38" y="162.37" fill="#fff" font-size="12.5" font-family="Liberation Sans" text-anchor="middle">920</text><g filter="url(#sh)"><rect x="533.43" y="205.06" width="33" height="28" fill="url(#lab)"/></g><text x="549.93" y="223.66" fill="#fff" font-size="12.5" font-family="Liberation Sans" text-anchor="middle">490</text><g filter="url(#sh)"><rect x="630.97" y="234.99" width="33" height="28" fill="url(#lab)"/></g><text x="647.47" y="253.59" fill="#fff" font-size="12.5" font-family="Liberation Sans" text-anchor="middle">280</text><g filter="url(#sh)"><rect x="728.52" y="143.77" width="33" height="28" fill="url(#lab)"/></g><text x="745.02" y="162.37" fill="#fff" font-size="12.5" font-family="Liberation Sans" text-anchor="middle">920</text><g filter="url(#sh)"><rect x="826.06" y="259.08" width="33" height="28" fill="url(#lab)"/></g><text x="842.56" y="277.68" fill="#fff" font-size="12.5" font-family="Liberation Sans" text-anchor="middle">111</text><g filter="url(#sh)"><rect x="923.61" y="156.60" width="33" height="28" fill="url(#lab)"/></g><text x="940.11" y="175.20" fill="#fff" font-size="12.5" font-family="Liberation Sans" text-anchor="middle">830</text><g filter="url(#sh)"><rect x="1021.15" y="182.26" width="33" height="28" fill="url(#lab)"/></g><text x="1037.65" y="200.86" fill="#fff" font-size="12.5" font-family="Liberation Sans" text-anchor="middle">650</text><g filter="url(#sh)"><rect x="1115.20" y="9.79" width="40" height="28" fill="url(#lab)"/></g><text x="1135.20" y="28.39" fill="#fff" font-size="12.5" font-family="Liberation Sans" text-anchor="middle">1860</text></svg>
<div style="position:absolute;left:0px;top:749px;width:1280px;height:23px;background:#efefef"></div>
<div style="position:absolute;left:0px;top:749px;width:1264px;height:1px;background:#a8a8a8"></div>
<svg style="position:absolute;left:6px;top:757px" width="10" height="10" viewBox="0 0 10 10"><path d="M1.5 0.5v9" stroke="#bcbcbc" stroke-width="1.2"/><path d="M2.5 5l4-4v2.5h3v3h-3V9z" fill="#bcbcbc"/></svg>
<svg style="position:absolute;left:29px;top:757px" width="10" height="10" viewBox="0 0 10 10"><path d="M1 5l4-4v2.5h3.5v3H5V9z" fill="#bcbcbc"/></svg>
<svg style="position:absolute;left:52px;top:757px" width="10" height="10" viewBox="0 0 10 10"><path d="M9 5L5 1v2.5H1.5v3H5V9z" fill="#bcbcbc"/></svg>
<svg style="position:absolute;left:75px;top:757px" width="10" height="10" viewBox="0 0 10 10"><path d="M8.5 0.5v9" stroke="#bcbcbc" stroke-width="1.2"/><path d="M7.5 5l-4-4v2.5h-3v3h3V9z" fill="#bcbcbc"/></svg>
<div style="position:absolute;left:95px;top:749px;width:104px;height:21px;background:#fff;border-left:1px solid #a8a8a8;border-right:1px solid #a8a8a8"></div>
<div style="position:absolute;left:96px;top:749px;width:102px;height:1px;background:#fff"></div>
<div style="position:absolute;left:96px;top:768px;width:103px;height:2px;background:#4c9a4a"></div>
<div style="position:absolute;left:100px;top:752px;height:18px;line-height:18px;font-size:11.6px;color:#111;white-space:nowrap;"><b>Annual Overview</b></div>
<div style="position:absolute;left:207px;top:752px;height:18px;line-height:18px;font-size:11.9px;color:#333;white-space:nowrap;">Products</div>
<div style="position:absolute;left:260px;top:753px;width:1px;height:15px;background:#aaa"></div>
<div style="position:absolute;left:267px;top:752px;height:18px;line-height:18px;font-size:11.5px;color:#333;white-space:nowrap;">Branches</div>
<div style="position:absolute;left:321px;top:753px;width:1px;height:15px;background:#aaa"></div>
<svg style="position:absolute;left:331px;top:755px" width="12" height="12" viewBox="0 0 12 12"><path d="M6 1.5v9M1.5 6h9" stroke="#555" stroke-width="1.6"/></svg>
<div style="position:absolute;left:628px;top:749px;width:1px;height:23px;background:#b0b0b0"></div>
<div style="position:absolute;left:631px;top:749px;width:1px;height:23px;background:#b0b0b0"></div>
<svg style="position:absolute;left:638px;top:756px" width="8" height="10" viewBox="0 0 8 10"><path d="M6 1L2 5l4 4z" fill="#c8c8c8"/></svg>
<div style="position:absolute;left:651px;top:756px;width:222px;height:10px;background:#c4c4c4;border-radius:5px"></div>
<svg style="position:absolute;left:1249px;top:756px" width="8" height="10" viewBox="0 0 8 10"><path d="M2 1l4 4-4 4z" fill="#c8c8c8"/></svg>
<div style="position:absolute;left:0px;top:772px;width:1280px;height:28px;background:#efefef"></div>
<div style="position:absolute;left:0px;top:772px;width:1264px;height:1px;background:#bdbdbd"></div>
<div style="position:absolute;left:461px;top:777px;width:1px;height:19px;background:#c8c8c8"></div>
<svg style="position:absolute;left:911px;top:777px" width="20" height="17" viewBox="0 0 20 17"><path d="M3.5 7.5A6.5 6.5 0 0 1 15 5M16.5 9.5A6.5 6.5 0 0 1 5 12" fill="none" stroke="#c4c4c4" stroke-width="1.5"/><path d="M16.5 2v5h-5z" fill="#c4c4c4"/><path d="M3.5 15v-5h5z" fill="#c4c4c4"/></svg>
<div style="position:absolute;left:951px;top:776px;height:20px;line-height:20px;font-size:14px;color:#222;white-space:nowrap;">Ins</div>
<div style="position:absolute;left:991px;top:777px;width:1px;height:19px;background:#c8c8c8"></div>
<div style="position:absolute;left:1000px;top:776px;height:20px;line-height:20px;font-size:14px;color:#222;white-space:nowrap;">AUTO</div>
<div style="position:absolute;left:1056px;top:785px;width:7px;height:1px;background:#777"></div>
<div style="position:absolute;left:1070px;top:785px;width:110px;height:1px;background:#c8c8c8"></div>
<div style="position:absolute;left:1123px;top:780px;width:1px;height:11px;background:#aaa"></div>
<div style="position:absolute;left:1123px;top:780px;width:11px;height:11px;background:#fff;border:1px solid #777;border-radius:6px"></div>
<svg style="position:absolute;left:1184px;top:779px" width="12" height="12" viewBox="0 0 12 12"><path d="M6 1.5v9M1.5 6h9" stroke="#777" stroke-width="1.1"/></svg>
<div style="position:absolute;left:1211px;top:776px;height:20px;line-height:20px;font-size:14px;color:#222;white-space:nowrap;">125%</div>
<svg style="position:absolute;left:1257px;top:778px" width="12" height="9" viewBox="0 0 12 9"><path d="M1 1l3 3-3 3M5.5 1l3 3-3 3" stroke="#666" stroke-width="1.1" fill="none"/></svg>
<div style="position:absolute;left:1264px;top:252px;width:16px;height:520px;background:#efefef"></div>
<div style="position:absolute;left:1264px;top:252px;width:16px;height:1px;background:#c8c8c8"></div>
<svg style="position:absolute;left:1265px;top:256px" width="14" height="10"><path d="M2 8h10L7 3z" fill="#c8c8c8"/></svg>
<div style="position:absolute;left:1267px;top:269px;width:10px;height:131px;background:#c4c4c4;border-radius:5px"></div>
<svg style="position:absolute;left:1265px;top:694px" width="14" height="10"><path d="M2 2h10L7 7z" fill="#c8c8c8"/></svg>
<div style="position:absolute;left:1264px;top:708px;width:16px;height:1px;background:#d0d0d0"></div>
<div style="position:absolute;left:1264px;top:708px;width:1px;height:64px;background:#d0d0d0"></div>
<div style="position:absolute;left:1264px;top:724px;width:16px;height:1px;background:#d0d0d0"></div>
<div style="position:absolute;left:1264px;top:740px;width:16px;height:1px;background:#d0d0d0"></div>
<div style="position:absolute;left:1264px;top:756px;width:16px;height:1px;background:#d0d0d0"></div>
<svg style="position:absolute;left:1266px;top:710px" width="13" height="13"><path d="M6.5 3L3.5 6.5h6z" fill="#555"/><path d="M6.5 6.5L3.5 10h6z" fill="#555"/></svg>
<svg style="position:absolute;left:1266px;top:726px" width="13" height="13"><circle cx="6.5" cy="6.5" r="3.2" fill="#d9413e"/></svg>
<svg style="position:absolute;left:1266px;top:742px" width="13" height="13"><path d="M6.5 6.5L3.5 3h6z" fill="#555"/><path d="M6.5 10L3.5 6.5h6z" fill="#555"/></svg>
<svg style="position:absolute;left:1265px;top:757px" width="15" height="15"><path d="M4.5 1v13M1 2.5h13" stroke="#555" stroke-width="1.1"/><path d="M7.5 5.5l5 5M7.5 5.5v3.5M7.5 5.5h3.5" stroke="#555" stroke-width="1" fill="none"/></svg>
</body></html>
